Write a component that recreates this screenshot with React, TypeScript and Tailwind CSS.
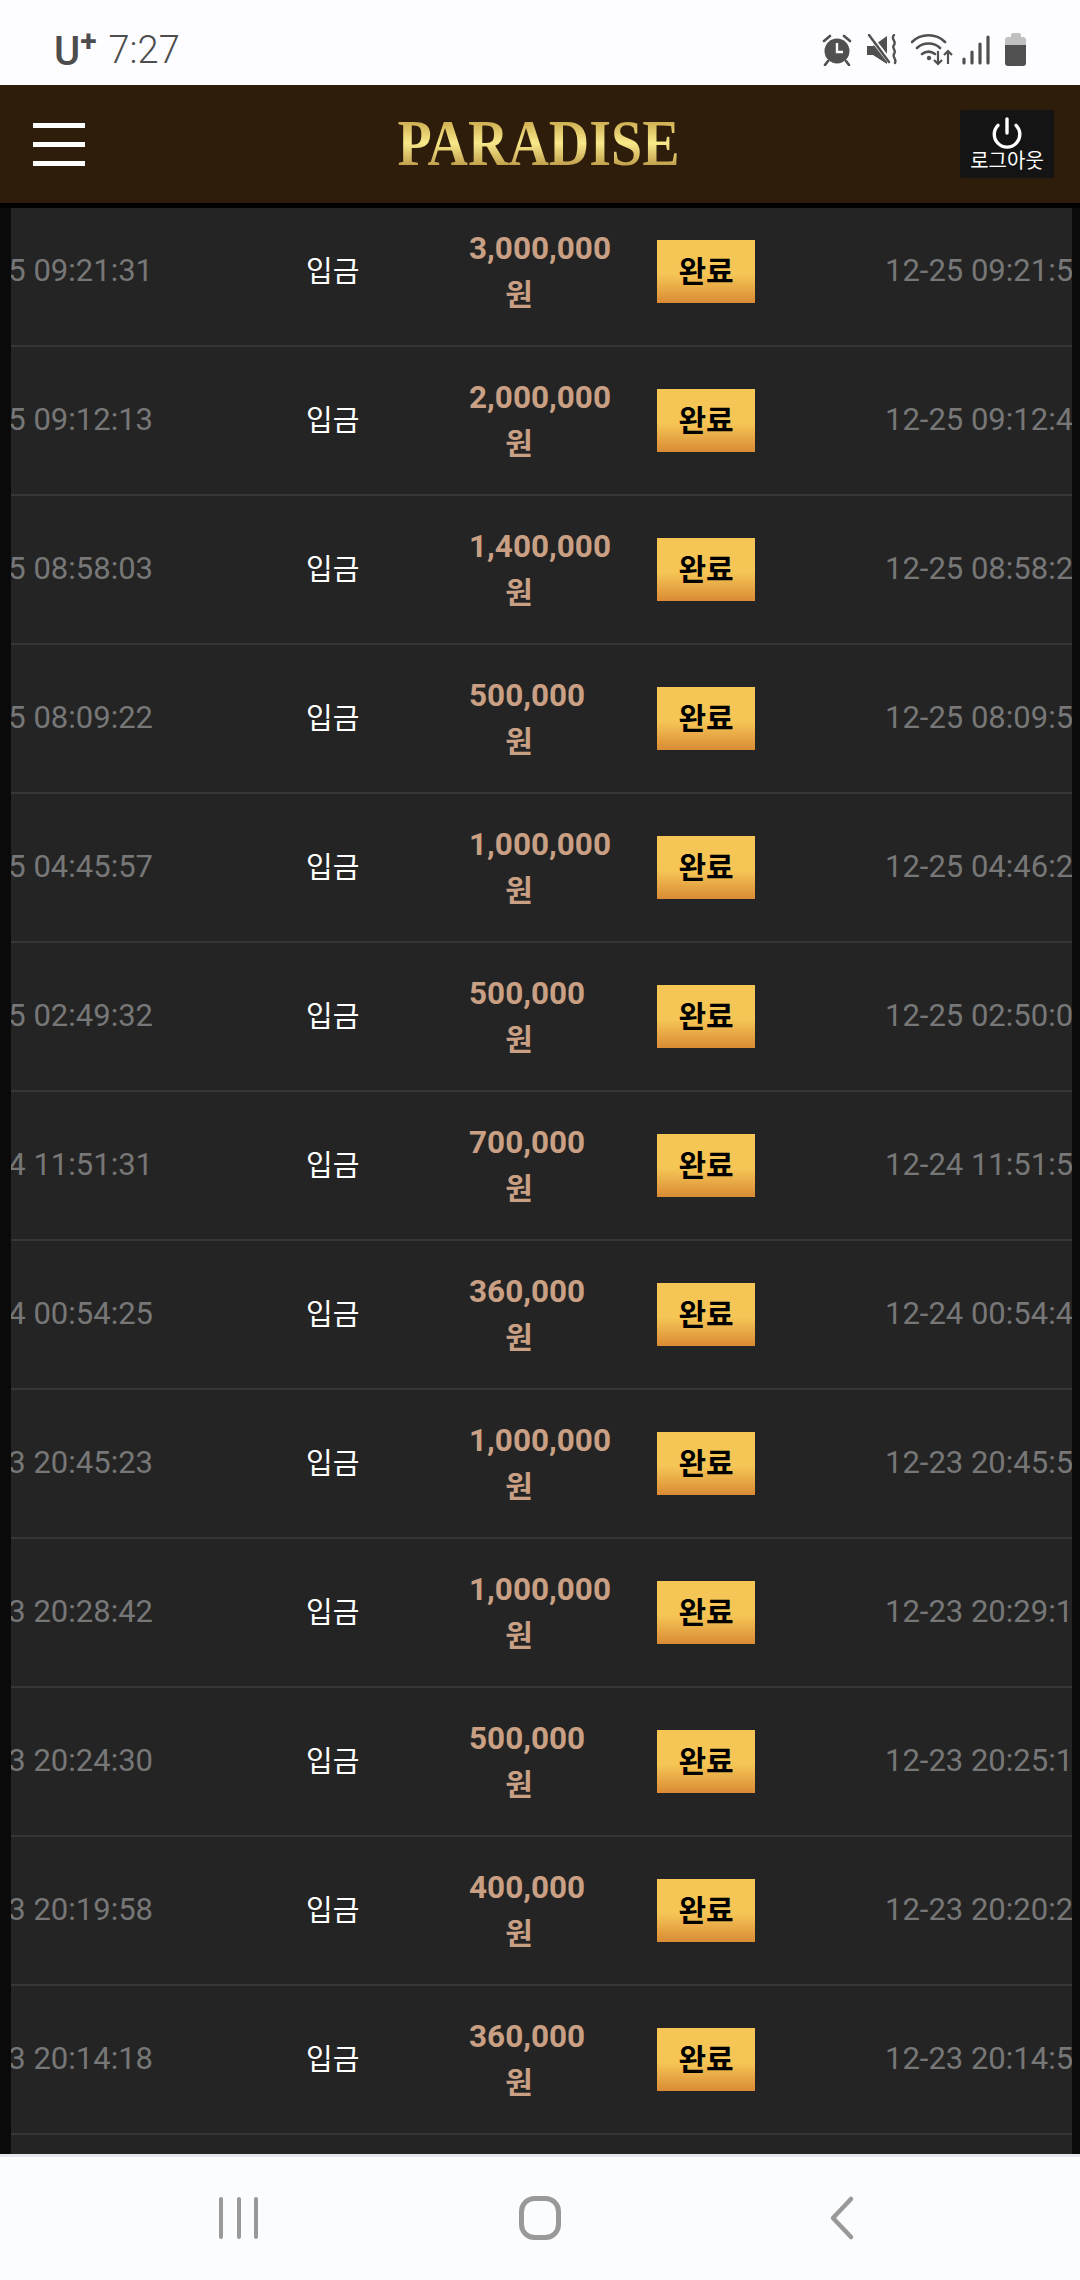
import { Power } from 'lucide-react'

type Deposit = {
  requested: string
  amount: string
  done: string
}

const DEPOSITS: Deposit[] = [
  { requested: '12-25 09:21:31', amount: '3,000,000', done: '12-25 09:21:52' },
  { requested: '12-25 09:12:13', amount: '2,000,000', done: '12-25 09:12:41' },
  { requested: '12-25 08:58:03', amount: '1,400,000', done: '12-25 08:58:22' },
  { requested: '12-25 08:09:22', amount: '500,000', done: '12-25 08:09:51' },
  { requested: '12-25 04:45:57', amount: '1,000,000', done: '12-25 04:46:20' },
  { requested: '12-25 02:49:32', amount: '500,000', done: '12-25 02:50:01' },
  { requested: '12-24 11:51:31', amount: '700,000', done: '12-24 11:51:53' },
  { requested: '12-24 00:54:25', amount: '360,000', done: '12-24 00:54:47' },
  { requested: '12-23 20:45:23', amount: '1,000,000', done: '12-23 20:45:50' },
  { requested: '12-23 20:28:42', amount: '1,000,000', done: '12-23 20:29:12' },
  { requested: '12-23 20:24:30', amount: '500,000', done: '12-23 20:25:10' },
  { requested: '12-23 20:19:58', amount: '400,000', done: '12-23 20:20:24' },
  { requested: '12-23 20:14:18', amount: '360,000', done: '12-23 20:14:55' },
]

function StatusIcons() {
  return (
    <div className="flex items-center text-[#505050]">
      {/* alarm */}
      <svg width="30" height="32" viewBox="0 0 30 32" className="mr-[15px]">
        <circle cx="15" cy="17" r="12.5" fill="currentColor" />
        <path d="M15 9v9h6" fill="none" stroke="#fdfcff" strokeWidth="2.4" />
        <path d="M2 7l6-5M28 7l-6-5M6 27l-3 4M24 27l3 4" stroke="currentColor" strokeWidth="2.6" strokeLinecap="round" />
      </svg>
      {/* vibrate / mute */}
      <svg width="31" height="31" viewBox="0 0 31 31" className="mr-[13px]">
        <path d="M0 11h6L20 1v28L6 20H0z" fill="currentColor" transform="translate(0 1)" />
        <path d="M3 2l21 27" stroke="#fdfcff" strokeWidth="5" />
        <path d="M2 1l20 27" stroke="currentColor" strokeWidth="2.4" strokeLinecap="round" />
        <path d="M27 1c-4 4 3 6 0 10 -3 3 3 5 0 9 -2 3 3 5 1 9" fill="none" stroke="currentColor" strokeWidth="2.4" strokeLinecap="round" />
      </svg>
      {/* wifi with arrows */}
      <svg width="42" height="34" viewBox="0 0 42 34" className="mr-[9px]">
        <path d="M1 9C10 0 25 0 34 9M6 15c6-6 17-6 23 0M11 21c4-3 9-3 13 0" fill="none" stroke="currentColor" strokeWidth="2.6" strokeLinecap="round" />
        <circle cx="18" cy="25" r="2.2" fill="currentColor" />
        <path d="M27 18v13M23 27l4 4 4-4M37 31V18M33 22l4-4 4 4" fill="none" stroke="currentColor" strokeWidth="2.2" />
      </svg>
      {/* signal */}
      <svg width="28" height="30" viewBox="0 0 28 30" className="mr-[15px]">
        <path d="M2 24v4M10 17v11M18 9v19M26 2v26" stroke="currentColor" strokeWidth="3.2" strokeLinecap="round" />
      </svg>
      {/* battery */}
      <div className="flex w-[21px] flex-col items-center">
        <div className="h-[4px] w-[10px] rounded-t-[2px] bg-[#c0c0c0]" />
        <div className="flex h-[29px] w-[21px] flex-col overflow-hidden rounded-[3px]">
          <div className="h-[8px] bg-[#c0c0c0]" />
          <div className="flex-1 bg-[#505050]" />
        </div>
      </div>
    </div>
  )
}

export default function App() {
  return (
    <div className="flex h-[2280px] w-[1080px] flex-col overflow-hidden bg-black font-['Roboto',_'Noto_Sans_CJK_KR',_sans-serif]">
      {/* status bar */}
      <div className="flex h-[85px] shrink-0 items-center justify-between bg-[#fdfcff] pl-[54px] pr-[54px] pt-[14px]">
        <div className="flex items-center text-[#4d4d4d]">
          <span className="text-[40px] font-medium leading-none mt-[5px]">U</span>
          <span className="text-[30px] font-bold leading-none -mt-[17px]">+</span>
          <span className="ml-[12px] text-[38px] font-light leading-none">7:27</span>
        </div>
        <StatusIcons />
      </div>

      {/* header */}
      <div className="flex h-[118px] shrink-0 items-center bg-[#2e1d0a] pl-[33px] pr-[26px]">
        <div className="flex-1">
          <div className="flex w-[52px] flex-col gap-[14px]">
            <div className="h-[5px] bg-white" />
            <div className="h-[5px] bg-white" />
            <div className="h-[5px] bg-white" />
          </div>
        </div>
        <div className="mr-[10px] -mt-[2px] scale-y-[1.17] bg-gradient-to-b from-[#b8902f] via-[#f8e98a] to-[#a8802e] bg-clip-text font-['Liberation_Serif',_serif] text-[56px] font-bold leading-none text-transparent">
          PARADISE
        </div>
        <div className="flex flex-1 justify-end">
          <div className="flex h-[68px] w-[94px] flex-col items-center rounded-[2px] bg-[#141414] pt-[6px]">
            <Power size={34} strokeWidth={2.4} className="text-white" />
            <span className="text-[20px] leading-[22px] text-white">로그아웃</span>
          </div>
        </div>
      </div>
      <div className="h-[5px] shrink-0 bg-black" />

      {/* deposit list */}
      <div className="min-h-0 flex-1 overflow-hidden bg-[#0a0a0a] pl-[11px] pr-[8px]">
        <div className="h-full overflow-hidden bg-[#242424]">
          <div className="-mt-[10px]">
            {DEPOSITS.map((d) => (
              <div
                key={d.requested}
                className="flex h-[149px] items-center border-b-2 border-[#363636] whitespace-nowrap"
              >
                <div className="flex w-[142px] shrink-0 justify-end text-[31px] text-[#777777]">
                  <span className="shrink-0">{d.requested}</span>
                </div>
                <div className="w-[316px] shrink-0 pl-[153px] pt-[2px] text-[29px] text-white">입금</div>
                <div className="w-[100px] shrink-0 text-center text-[31.5px] font-bold leading-[46px] text-[#c9a084]">
                  <div>{d.amount}</div>
                  <div className="text-[30px]">원</div>
                </div>
                <div className="ml-[88px] flex h-[63px] w-[98px] shrink-0 items-center justify-center bg-gradient-to-b from-[#f5c555] from-55% to-[#d98b35] text-[30px] font-bold text-black">
                  완료
                </div>
                <div className="ml-[130px] text-[31px] text-[#777777]">{d.done}</div>
              </div>
            ))}
            <div className="h-[149px]" />
          </div>
        </div>
      </div>

      {/* android nav */}
      <div className="flex h-[126px] shrink-0 items-center border-t-[3px] border-[#e4e8ee] bg-[#fbfcfe] text-[#999999]">
        <svg width="1080" height="123" viewBox="0 0 1080 123" fill="none" stroke="currentColor">
          <path d="M221 42v38M239 42v38M256 42v38" strokeWidth="4" strokeLinecap="round" />
          <rect x="521.5" y="41.5" width="37" height="39" rx="13" strokeWidth="5" />
          <path d="M851 42l-18 19 18 19" strokeWidth="4.5" strokeLinecap="round" strokeLinejoin="round" />
        </svg>
      </div>
    </div>
  )
}
